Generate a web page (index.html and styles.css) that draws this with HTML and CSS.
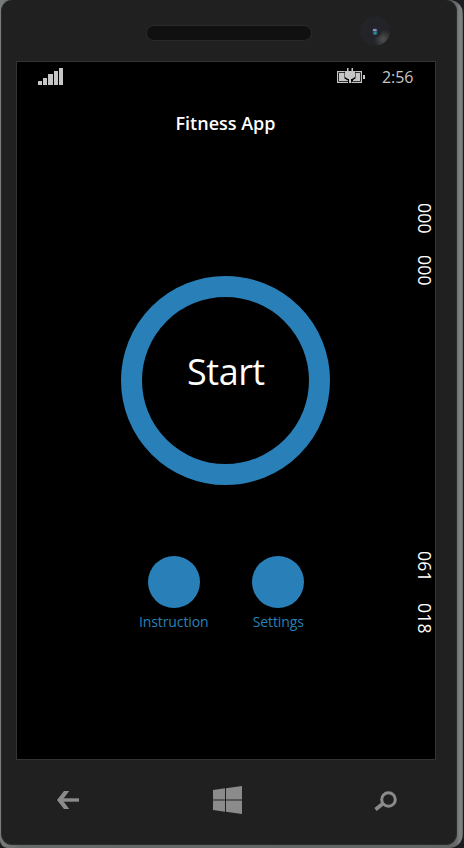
FILE: index.html
```html
<!DOCTYPE html>
<html lang="en">
<head>
<meta charset="utf-8">
<title>Fitness App</title>
<link rel="stylesheet" href="styles.css">
</head>
<body>
<div class="shell">
<div class="phone">
  <header class="top">
    <div class="speaker"></div>
    <svg class="camera" width="30" height="30" viewBox="0 0 30 30">
      <defs>
        <radialGradient id="glint" cx="78%" cy="78%" r="32%"><stop offset="0" stop-color="#505050"/><stop offset="1" stop-color="#505050" stop-opacity="0"/></radialGradient>
      </defs>
      <circle cx="15" cy="15" r="15" fill="#222428"/>
      <circle cx="15" cy="15" r="15" fill="url(#glint)"/>
      <circle cx="15" cy="15" r="6.500" fill="#222429"/>
      <rect x="12.500" y="12.500" width="5" height="6.500" rx="2" fill="#35475f"/>
      <rect x="13" y="13" width="3.500" height="2" fill="#8f8bc0"/>
      <rect x="14" y="15.500" width="2.500" height="3" fill="#258e91"/>
    </svg>
  </header>
  <main class="screen">
    <div class="status">
      <svg class="signal" width="25" height="17" viewBox="0 0 25 17" fill="#c6c6c6">
        <path d="M0 13h4v4H0zM5 10h4v7H5zM10 6h5v11h-5zM16 3h4v14h-4zM21 0h4v17h-4z"/>
      </svg>
      <svg class="battery" width="29" height="16" viewBox="0 0 29 16">
        <path d="M.6 3.600H24.400V14.400H.6Z" fill="none" stroke="#c6c6c6" stroke-width="1.200"/>
        <path d="M2 5H9V10L11 12V13H2ZM16 12L18 10V5H23V13H16ZM26 7h2v4h-2z" fill="#c6c6c6"/>
        <path d="M7.500 3.500V10.500L11 12.500V15.500H14.500V12.500L18.500 10.500V3.500Z" fill="#000"/>
        <path d="M10 0h1.500v3H14.500V0H16v3h2v6l-3 2h-1v4h-2v-4h-1L8 9V3h2z" fill="#c6c6c6"/>
      </svg>
      <span class="time">2:56</span>
    </div>
    <h1 class="title">Fitness App</h1>
    <button class="start">Start</button>
    <nav class="actions">
      <div class="action"><div class="dot"></div><span class="label">Instruction</span></div>
      <div class="action"><div class="dot"></div><span class="label">Settings</span></div>
    </nav>
    <aside class="counters">
      <div class="pair"><span>000</span><span>000</span></div>
      <div class="pair"><span>061</span><span>018</span></div>
    </aside>
  </main>
  <footer class="keys">
    <svg width="23" height="20" viewBox="0 0 23 20"><path d="M22 10H4" stroke="#8b8b8b" stroke-width="3.400"/><path d="M0 10L7 1H12.200L5.500 10L12.200 19H7Z" fill="#8b8b8b"/></svg>
    <svg width="29" height="28" viewBox="0 0 29 28" fill="#8b8b8b"><path d="M0 4l12-1.700v11.200H0zM13 2.200L29 0v13.500H13zM0 14.500h12v11.200L0 24zM13 14.500h16V28l-16-2.200z"/></svg>
    <svg class="search" width="24" height="20" viewBox="0 0 24 20" fill="none" stroke="#8b8b8b"><circle cx="14.500" cy="8.500" r="6.800" stroke-width="3"/><path d="M9 12.500L1.500 18.500" stroke-width="3.600"/></svg>
  </footer>
</div>
</div>
</body>
</html>
```
FILE: styles.css
```css
* { box-sizing: border-box; }
body {
  margin: 0;
  background: #1c1c20;
  font-family: "Open Sans", "Noto Sans", sans-serif;
}
.shell {
  width: 463px;
  height: 848px;
  padding: 0 6px 3px 1px;
  background: linear-gradient(90deg, #787d7b 0, #666b69 20px, #606563 450px, #686d6b 457px, #7c817f 459px, #7c817f 462px, #505453 463px);
  border-radius: 0 14px 14px 8px;
}
.phone {
  height: 845px;
  background: #202020;
  border-radius: 11px;
  border: 1px solid #292b2b;
  border-top: 0;
}
.top {
  height: 61px;
  display: flex;
  align-items: flex-start;
  padding: 25px 0 0 144px;
}
.speaker {
  width: 166px;
  height: 16px;
  border: 1px solid #292929;
  border-radius: 8px;
  background: #101010;
}
.camera { margin: -9px 0 0 48px; }
.screen {
  width: 420px;
  height: 699px;
  margin-left: 14px;
  border: 1px solid #343434;
  background: #000;
  display: grid;
  grid-template-columns: 398px 20px;
  grid-template-rows: 47px 167px 209px 71px 1fr;
}
.status {
  grid-area: 1 / 1 / 2 / 3;
  display: flex;
  align-items: flex-start;
  padding: 6px 0 0 21px;
  color: #c6c6c6;
}
.battery { margin-left: 274px; }
.time {
  margin: -3px 0 0 16px;
  font: 16px/24px "Open Sans", sans-serif;
  letter-spacing: -0.1px;
}
.title {
  grid-area: 2 / 1 / 3 / 3;
  justify-self: center;
  margin: 0 1px 0 0;
  color: #fff;
  font-size: 18px;
  line-height: 28px;
  font-weight: 600;
}
.start {
  grid-area: 3 / 1 / 4 / 3;
  width: 209px;
  height: 209px;
  margin-left: 104.4px;
  padding: 0 0 17px;
  border: 21px solid #2980b9;
  border-radius: 50%;
  background: #000;
  color: #fff;
  font: 36px/48px "Open Sans", sans-serif;
  letter-spacing: -0.5px;
}
.actions {
  grid-area: 5 / 1 / 6 / 2;
  display: flex;
  padding-left: 104.5px;
}
.action {
  width: 104.5px;
  display: flex;
  flex-direction: column;
  align-items: center;
}
.dot {
  width: 52px;
  height: 52px;
  border-radius: 50%;
  background: #2980b9;
}
.label {
  color: #2980b9;
  font-size: 14px;
  line-height: 20px;
  margin-top: 4px;
  letter-spacing: -0.1px;
}
.counters {
  grid-area: 2 / 2 / 6 / 3;
  padding-top: 94px;
  color: #fff;
}
.pair {
  display: flex;
  gap: 21px;
  writing-mode: vertical-rl;
  font-size: 17.5px;
  line-height: 20px;
  font-weight: 500;
  letter-spacing: 0.3px;
}
.pair:first-child { height: 348px; }
.keys {
  display: flex;
  justify-content: space-between;
  align-items: center;
  height: 80px;
  padding: 0 58px 0 55px;
}
.search { margin-top: 2px; }
```
